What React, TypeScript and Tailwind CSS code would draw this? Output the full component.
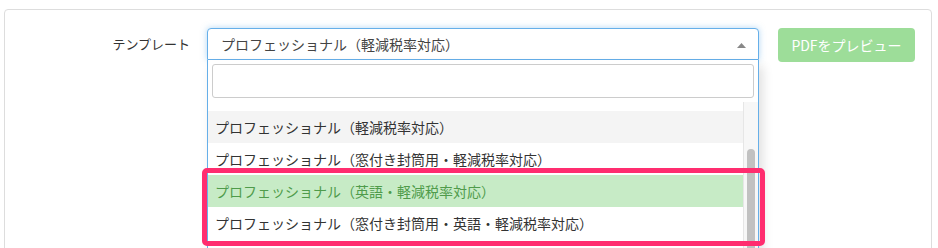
import React from "react";

const JP = { fontFamily: '"Noto Sans CJK JP", "Noto Sans", sans-serif' };

export default function App() {
  const items = [
    { t: "プロフェッショナル（軽減税率対応）", cls: "bg-[#f4f4f4] text-[#333]" },
    { t: "プロフェッショナル（窓付き封筒用・軽減税率対応）", cls: "bg-white text-[#333]" },
    { t: "プロフェッショナル（英語・軽減税率対応）", cls: "bg-[#c7ebc6] text-[#4f9b4b]" },
    { t: "プロフェッショナル（窓付き封筒用・英語・軽減税率対応）", cls: "bg-white text-[#333]" },
  ];
  return (
    <div className="relative w-[938px] h-[248px] overflow-hidden bg-white" style={JP}>
      <div className="ml-[4px] mt-[9px] w-[928px] h-[260px] border border-[#dddddd] rounded-[4px] bg-white">
        <div className="flex pt-[18px]">
          <div className="w-[185px] text-right text-[13px] leading-[32px] text-[#333]">テンプレート</div>
          <div className="relative ml-[17px] w-[552px]">
            <div className="relative h-[32px] border border-[#66afe9] rounded-t-[4px] bg-white shadow-[0_0_6px_rgba(102,175,233,0.5)] flex items-center pl-[13px] text-[14px] text-[#444]">
              プロフェッショナル（軽減税率対応）
              <svg className="absolute right-[12px] top-[14px]" width="9" height="5" viewBox="0 0 9 5">
                <path d="M0 5 L4.5 0 L9 5 Z" fill="#888" />
              </svg>
            </div>
            <div className="absolute left-0 top-[32px] w-[552px] h-[190px] border-x border-b border-[#66afe9] bg-white shadow-[4px_6px_10px_rgba(0,0,0,0.12)]">
              <div className="p-[4px]">
                <div className="h-[34px] border border-[#cccccc] rounded-[3px] bg-white" />
              </div>
              <div className="flex">
                <div className="flex-1">
                  <div className="h-[9px]" />
                  {items.map((it) => (
                    <div key={it.t} className={`h-[32px] flex items-center pl-[7px] text-[14px] whitespace-nowrap ${it.cls}`}>
                      {it.t}
                    </div>
                  ))}
                </div>
                <div className="w-[15px] h-[150px] bg-[#f7f7f7] border-l border-[#e6e6e6] pt-[47px] flex justify-center">
                  <div className="w-[8px] h-[120px] rounded-[4px] bg-[#c1c1c1]" />
                </div>
              </div>
            </div>
          </div>
          <div className="ml-[19px] w-[137px] h-[34px] rounded-[4px] bg-[#9ddd99] text-white text-[14px] flex items-center justify-center">
            PDFをプレビュー
          </div>
        </div>
      </div>
      <div className="absolute left-[202px] top-[168px] w-[563px] h-[78px] border-[5px] border-[#ff2d6f] rounded-[5px]" />
    </div>
  );
}
